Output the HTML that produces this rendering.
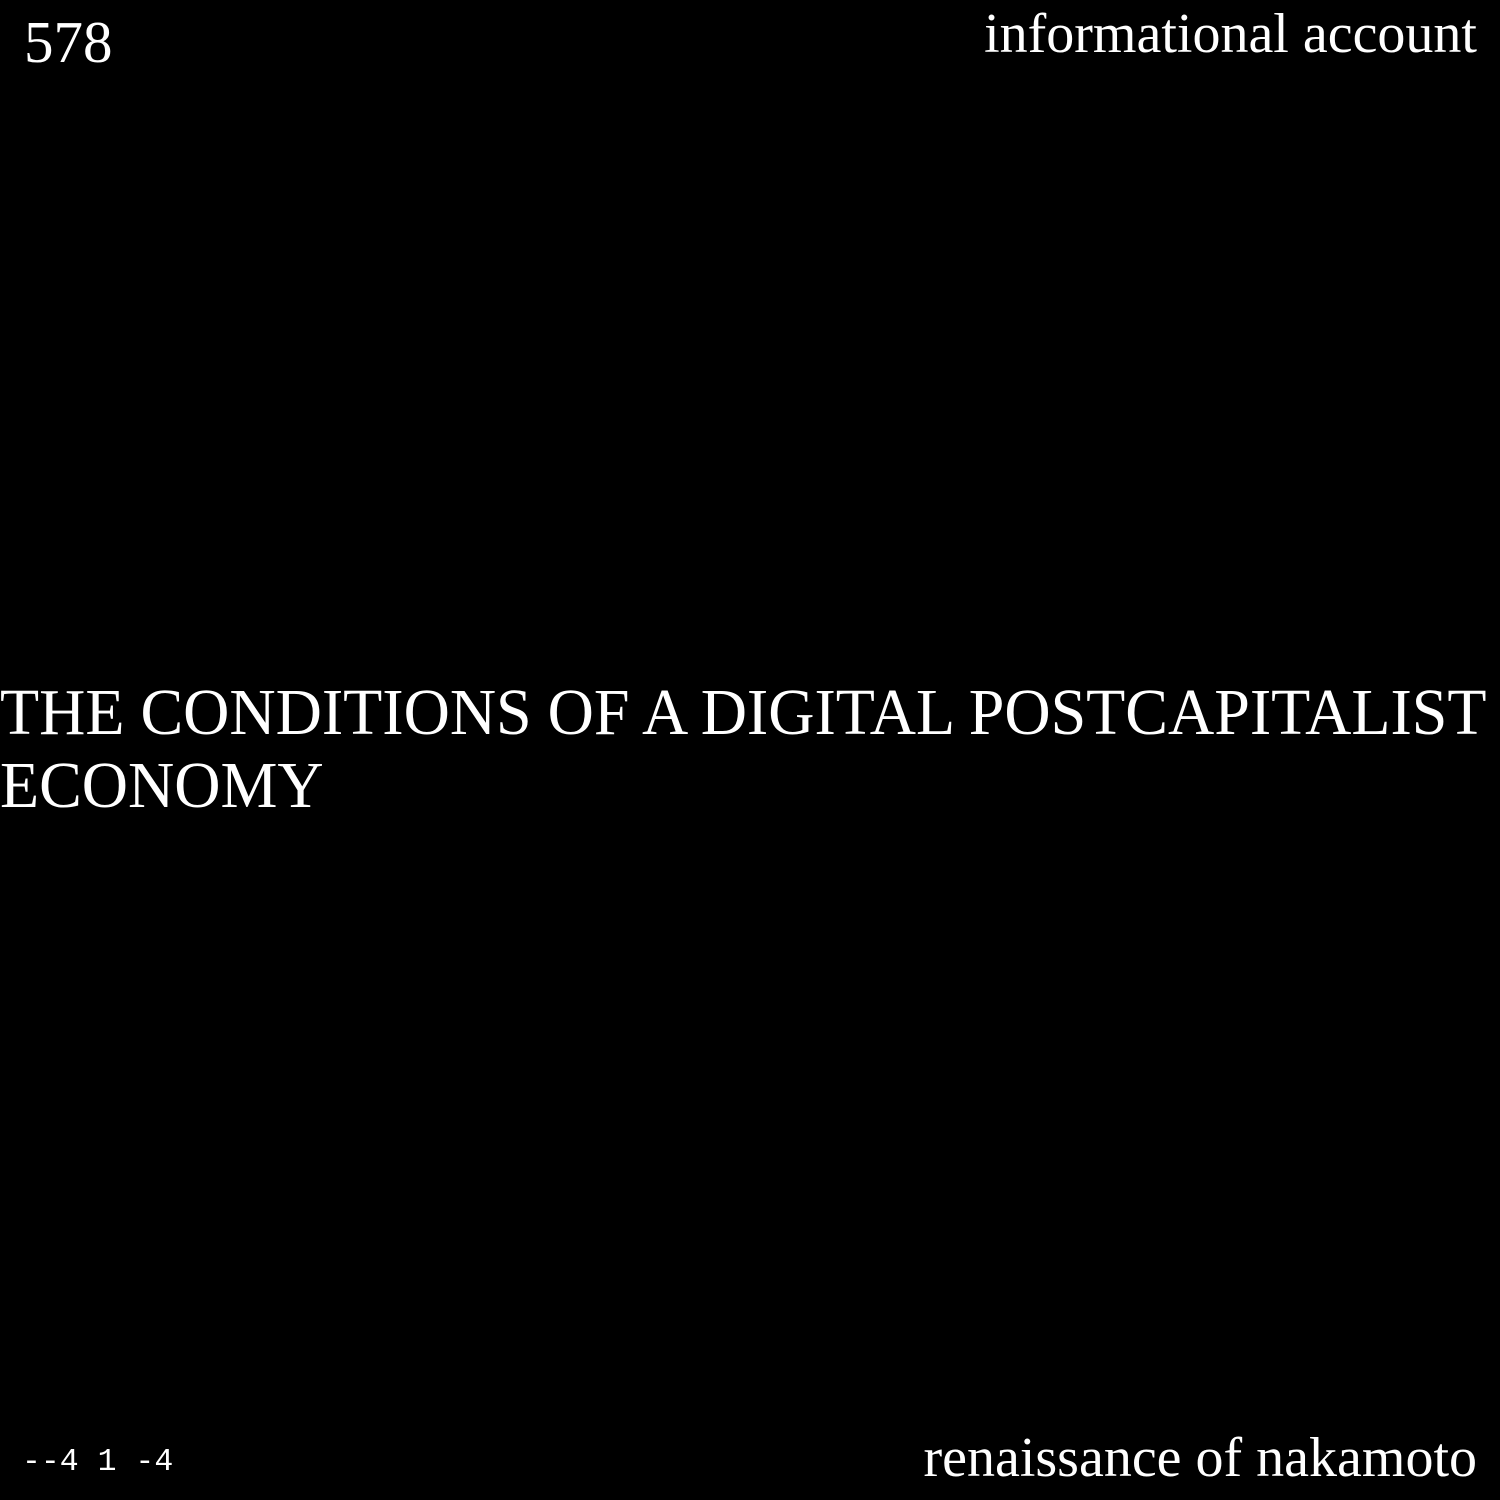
<!DOCTYPE html>
<html><head><style>
html,body{margin:0;padding:0;background:#000;width:1500px;height:1500px;overflow:hidden;color:#fff}
div{position:absolute;white-space:nowrap}
.s{font-family:"Liberation Serif",serif}
</style></head><body>
<div class="s" style="left:24px;top:11px;font-size:59px;line-height:62px">578</div>
<div class="s" style="right:23px;top:3px;font-size:56px;line-height:62px">informational account</div>
<div class="s" style="left:0;top:676px;font-size:66px;line-height:73px;transform:scaleX(0.97);transform-origin:0 0">THE CONDITIONS OF A DIGITAL POSTCAPITALIST<br>ECONOMY</div>
<div style="left:22px;top:1445px;font-family:'Liberation Mono',monospace;font-size:31.5px;line-height:36px">--4 1 -4</div>
<div class="s" style="right:23px;top:1427px;font-size:56px;line-height:62px">renaissance of nakamoto</div>
</body></html>
